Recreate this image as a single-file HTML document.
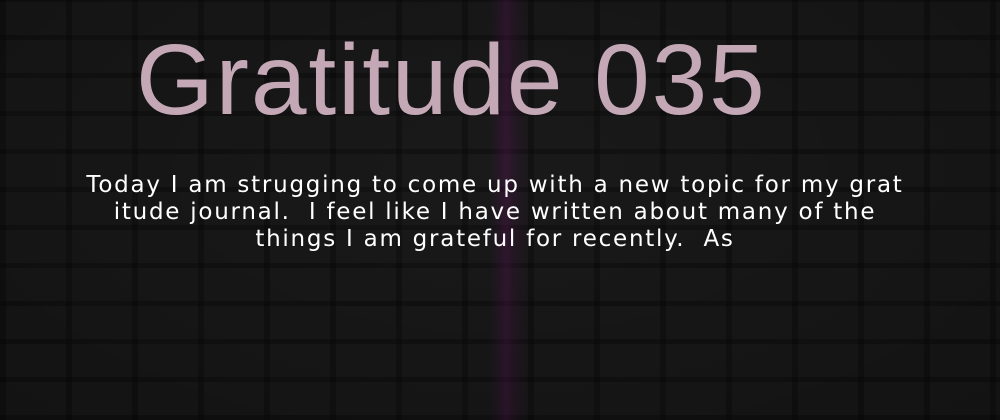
<!DOCTYPE html>
<html><head><style>
html,body{margin:0;padding:0;}
body{width:1000px;height:420px;overflow:hidden;position:relative;background:#161516;font-family:"Liberation Sans","DejaVu Sans",sans-serif;}
.grid{position:absolute;inset:0;
background:
 linear-gradient(90deg,transparent 0,transparent 490px,rgba(80,20,80,.25) 500px,rgba(100,20,95,.35) 506px,rgba(80,20,80,.22) 514px,transparent 528px),
 repeating-linear-gradient(90deg,rgba(0,0,0,.28) 0 6px,transparent 6px 66px),
 repeating-linear-gradient(0deg,rgba(0,0,0,.28) 0 5px,transparent 5px 38px),
 #1c1b1c;}
.shade{position:absolute;inset:0;background:radial-gradient(ellipse at 50% 40%,rgba(0,0,0,.05),rgba(0,0,0,.3));}
h1{position:absolute;left:136px;top:30px;margin:0;font-weight:normal;font-size:100px;letter-spacing:1.9px;color:#c4a8b5;line-height:100px;white-space:nowrap;}
p{position:absolute;left:20px;width:950px;top:172px;margin:0;text-align:center;color:#fff;font-family:"DejaVu Sans",sans-serif;font-size:23px;line-height:27px;letter-spacing:1.75px;}
</style></head><body>
<div class="grid"></div><div class="shade"></div>
<h1>Gratitude 035</h1>
<p>Today I am strugging to come up with a new topic for my grat<br>itude journal.&nbsp; I feel like I have written about many of the<br>things I am grateful for recently.&nbsp; As</p>
</body></html>
